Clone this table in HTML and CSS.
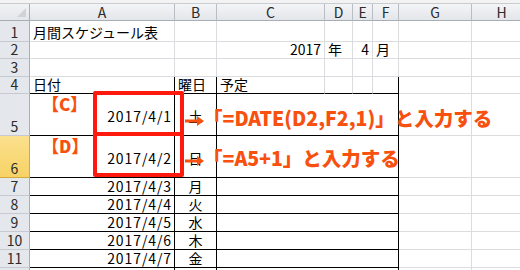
FILE: index.html
```html
<!DOCTYPE html>
<html lang="ja">
<head>
<meta charset="utf-8">
<title>月間スケジュール表</title>
<link rel="stylesheet" href="styles.css">
</head>
<body>
<div class="sheet">
  <div class="row head">
    <div class="corner"></div>
    <div class="ch">A</div><div class="ch">B</div><div class="ch">C</div><div class="ch">D</div>
    <div class="ch">E</div><div class="ch">F</div><div class="ch">G</div><div class="ch">H</div>
  </div>
  <div class="row h21">
    <div class="rh">1</div>
    <div class="c">月間スケジュール表</div><div class="c"></div><div class="c"></div><div class="c"></div>
    <div class="c"></div><div class="c"></div><div class="c"></div><div class="c"></div>
  </div>
  <div class="row h17">
    <div class="rh">2</div>
    <div class="c"></div><div class="c"></div><div class="c right">2017</div><div class="c">年</div>
    <div class="c right">4</div><div class="c">月</div><div class="c"></div><div class="c"></div>
  </div>
  <div class="row h18">
    <div class="rh">3</div>
    <div class="c"></div><div class="c"></div><div class="c"></div><div class="c"></div>
    <div class="c"></div><div class="c"></div><div class="c"></div><div class="c"></div>
  </div>
  <div class="row h17">
    <div class="rh">4</div>
    <div class="c bb br">日付</div><div class="c bb br">曜日</div><div class="c bb">予定</div><div class="c bb"></div>
    <div class="c bb"></div><div class="c bb br"></div><div class="c"></div><div class="c"></div>
  </div>
  <div class="row h42">
    <div class="rh">5</div>
    <div class="c bb br right mid date">2017/4/1</div><div class="c bb br center mid">土</div><div class="c bb br span4"></div>
    <div class="c"></div><div class="c"></div>
  </div>
  <div class="row h42">
    <div class="rh sel">6</div>
    <div class="c bb br right mid date">2017/4/2</div><div class="c bb br center mid">日</div><div class="c bb br span4"></div>
    <div class="c"></div><div class="c"></div>
  </div>
  <div class="row h18">
    <div class="rh">7</div>
    <div class="c bb br right date">2017/4/3</div><div class="c bb br center">月</div><div class="c bb br span4"></div>
    <div class="c"></div><div class="c"></div>
  </div>
  <div class="row h18">
    <div class="rh">8</div>
    <div class="c bb br right date">2017/4/4</div><div class="c bb br center">火</div><div class="c bb br span4"></div>
    <div class="c"></div><div class="c"></div>
  </div>
  <div class="row h18">
    <div class="rh">9</div>
    <div class="c bb br right date">2017/4/5</div><div class="c bb br center">水</div><div class="c bb br span4"></div>
    <div class="c"></div><div class="c"></div>
  </div>
  <div class="row h18">
    <div class="rh">10</div>
    <div class="c bb br right date">2017/4/6</div><div class="c bb br center">木</div><div class="c bb br span4"></div>
    <div class="c"></div><div class="c"></div>
  </div>
  <div class="row h18">
    <div class="rh">11</div>
    <div class="c bb br right date">2017/4/7</div><div class="c bb br center">金</div><div class="c bb br span4"></div>
    <div class="c"></div><div class="c"></div>
  </div>
  <div class="row h18">
    <div class="rh"></div>
    <div class="c br"></div><div class="c br"></div><div class="c br span4"></div>
    <div class="c"></div><div class="c"></div>
  </div>

  <!-- callouts drawn over the cells -->
  <div class="frame frame-c"></div>
  <div class="frame frame-d"></div>
  <div class="tag tag-c">【C】</div>
  <div class="tag tag-d">【D】</div>
  <svg class="arrow arrow-c" width="19" height="10" viewBox="0 0 19 10"><path d="M0 3.5h13v3H0z M12 0l7 5-7 5z" fill="#f7500f"/></svg>
  <svg class="arrow arrow-d" width="19" height="10" viewBox="0 0 19 10"><path d="M0 3.5h13v3H0z M12 0l7 5-7 5z" fill="#f7500f"/></svg>
  <div class="note note-c">「=DATE(D2,F2,1)」と入力する</div>
  <div class="note note-d">「=A5+1」と入力する</div>
</div>
</body>
</html>
```

FILE: styles.css
```css
body {
  margin: 0;
  background: #fff;
  font-family: "Noto Sans CJK JP", sans-serif;
}

.sheet {
  position: relative;
  width: 520px;
  height: 270px;
  overflow: hidden;
  padding-top: 3px;
  box-sizing: border-box;
  background: #f3f3f3;
}

.row {
  display: grid;
  grid-template-columns: 30px 145px 42px 108px 28px 20px 26px 73px 60px;
  background: #fff;
}

.head { height: 18px; background: #e6e9ed; border-top: 1px solid #c9ccd0; box-sizing: border-box; }
.h17 { height: 17px; }
.h18 { height: 18px; }
.h21 { height: 21px; }
.h42 { height: 42px; }

.row > div {
  box-sizing: border-box;
  display: flex;
  align-items: flex-end;
  white-space: nowrap;
  font-size: 14px;
  line-height: 15px;
  color: #000;
}

.corner {
  position: relative;
  background: linear-gradient(#f1f2f4, #e4e7eb);
  border-right: 1px solid #a9aeb5;
  border-bottom: 1px solid #a9aeb5;
}

.corner::after {
  content: "";
  position: absolute;
  right: 3px;
  bottom: 3px;
  border-style: solid;
  border-width: 0 0 9px 9px;
  border-color: transparent transparent #cfd2d6 transparent;
}

.row > .ch {
  background: linear-gradient(#f3f4f6, #e3e6ea);
  border-right: 1px solid #b9bec5;
  border-bottom: 1px solid #a9aeb5;
  justify-content: center;
  align-items: center;
  color: #2b2b2b;
}

.row > .rh {
  background: #e4e7eb;
  border-right: 1px solid #a9aeb5;
  border-bottom: 1px solid #c6cad0;
  justify-content: center;
  color: #2b2b2b;
  padding-bottom: 1px;
}

.row > .rh.sel {
  background: linear-gradient(#fbe08e, #f7d365);
  border-right-color: #d6a83a;
  border-bottom-color: #d6a83a;
}

.row > .c {
  border-right: 1px solid #dadcdf;
  border-bottom: 1px solid #dadcdf;
  padding: 0 3px 1px;
}

.row > .c.bb { border-bottom-color: #000; }
.row > .c.br { border-right-color: #000; }
.row > .c.right { justify-content: flex-end; }
.row > .c.center { justify-content: center; }
.row > .c.mid { align-items: center; padding-top: 4px; }
.row > .c.span4 { grid-column: span 4; }
.row > .c.date { letter-spacing: 0.9px; padding-right: 2px; }

/* red frames around A5 and A6 */
.frame {
  position: absolute;
  left: 93px;
  width: 91px;
  border: 4px solid #ff1a0d;
  border-radius: 2px;
  box-sizing: border-box;
}
.frame-c { top: 91px; height: 45px; }
.frame-d { top: 132px; height: 45px; }

.tag, .note {
  position: absolute;
  color: #f7500f;
  font-weight: 900;
  white-space: nowrap;
}

.tag { left: 42px; font-size: 17px; line-height: 18px; }
.tag-c { top: 95px; }
.tag-d { top: 137px; }

.arrow { position: absolute; left: 185px; }
.arrow-c { top: 116px; }
.arrow-d { top: 156px; }

.note { left: 203px; font-size: 19.5px; line-height: 22px; }
.note-c { top: 107px; }
.note-d { top: 147px; }
```
